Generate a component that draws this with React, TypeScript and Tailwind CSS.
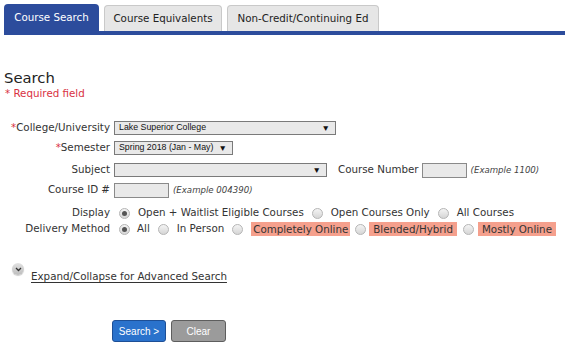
import React from "react";

const Radio = ({ checked, className = "" }: { checked?: boolean; className?: string }) => (
  <span
    className={`inline-flex h-[11px] w-[11px] shrink-0 items-center justify-center rounded-full border border-[#b5b5b5] bg-gradient-to-b from-[#f4f4f4] to-[#d6d6d6] ${className}`}
  >
    {checked && <span className="h-[5px] w-[5px] rounded-full bg-[#555]" />}
  </span>
);

const Select = ({ text, w }: { text: string; w: string }) => (
  <div
    className={`${w} flex h-[14px] items-center justify-between border border-[#7a7a7a] bg-[#e9e9e9] pl-[4px] pr-[5px] text-[8.8px] text-[#111]`}
    style={{ fontFamily: '"Liberation Sans", Arial, sans-serif' }}
  >
    <span>{text}</span>
    <span className="text-[8.5px] leading-none">▼</span>
  </div>
);

const Label = ({ children, req }: { children: React.ReactNode; req?: boolean }) => (
  <div className="w-[110px] shrink-0 text-right">
    {req && <span className="text-[#d9313f]">*</span>}
    {children}
  </div>
);

export default function App() {
  return (
    <div
      className="h-[350px] w-[565px] bg-white text-[10.3px] text-[#333]"
      style={{ fontFamily: '"DejaVu Sans", Verdana, sans-serif' }}
    >
      {/* Tabs */}
      <div className="flex items-end gap-[5px] pl-[4px] pt-[4px]">
        <div className="flex h-[27px] w-[95px] items-center justify-center rounded-t-[4px] bg-[#2c4c9c] text-white">
          Course Search
        </div>
        <div className="flex h-[26px] w-[118px] items-center justify-center rounded-t-[4px] border border-b-0 border-[#c9c9c9] bg-[#e6e6e6] text-[#222]">
          Course Equivalents
        </div>
        <div className="flex h-[26px] w-[152px] items-center justify-center rounded-t-[4px] border border-b-0 border-[#c9c9c9] bg-[#e6e6e6] text-[#222]">
          Non-Credit/Continuing Ed
        </div>
      </div>
      <div className="ml-[4px] h-[4px] bg-[#2c4c9c]" />

      {/* Heading */}
      <div className="mt-[34px] pl-[4px] text-[14.8px] leading-[18px] text-[#222]">Search</div>
      <div className="pl-[5px] leading-[12px] text-[#d9313f]">* Required field</div>

      {/* Form */}
      <div className="mt-[19px] flex flex-col">
        <div className="flex h-[20px] items-center gap-[4px]">
          <Label req>College/University</Label>
          <Select text="Lake Superior College" w="w-[222px]" />
        </div>
        <div className="flex h-[20px] items-center gap-[4px]">
          <Label req>Semester</Label>
          <Select text="Spring 2018 (Jan - May)" w="w-[119px]" />
        </div>
        <div className="mt-[2px] flex h-[20px] items-center gap-[4px]">
          <Label>Subject</Label>
          <Select text="" w="w-[213px]" />
          <span className="ml-[7px]">Course Number</span>
          <span className="-ml-[1px] h-[15px] w-[45px] border border-[#8a8a8a] bg-[#e9e9e9]" />
          <span className="text-[8.6px] italic text-[#444]">(Example 1100)</span>
        </div>
        <div className="flex h-[20px] items-center gap-[4px]">
          <Label>Course ID #</Label>
          <span className="h-[15px] w-[55px] border border-[#8a8a8a] bg-[#e9e9e9]" />
          <span className="text-[8.6px] italic text-[#444]">(Example 004390)</span>
        </div>
        <div className="mt-[5px] flex h-[16px] items-center">
          <Label>Display</Label>
          <div className="ml-[9px] flex items-center gap-[8px]">
            <Radio checked />
            <span>Open + Waitlist Eligible Courses</span>
            <Radio />
            <span>Open Courses Only</span>
            <Radio />
            <span>All Courses</span>
          </div>
        </div>
        <div className="flex h-[16px] items-center">
          <Label>Delivery Method</Label>
          <div className="ml-[9px] flex items-center gap-[8px]">
            <Radio checked />
            <span className="-ml-[1px]">All</span>
            <Radio />
            <span>In Person</span>
            <Radio />
            <span className="bg-[#f5a08d] px-[2px] leading-[14px]">Completely Online</span>
            <Radio className="-ml-[3px]" />
            <span className="-ml-[5px] bg-[#f5a08d] px-[4px] leading-[14px]">Blended/Hybrid</span>
            <Radio className="-ml-[2px]" />
            <span className="-ml-[4px] bg-[#f5a08d] px-[4px] leading-[14px]">Mostly Online</span>
          </div>
        </div>
      </div>

      {/* Expand */}
      <div className="mt-[26px] flex items-start pl-[12px]">
        <span className="flex h-[12px] w-[12px] items-center justify-center rounded-full bg-gradient-to-b from-[#e2e2e2] to-[#bdbdbd] shadow-[0_1px_1px_rgba(0,0,0,0.2)]">
          <svg width="7" height="5" viewBox="0 0 7 5">
            <path d="M1 1 L3.5 3.5 L6 1" stroke="#333" strokeWidth="1.3" fill="none" />
          </svg>
        </span>
        <span className="ml-[7px] mt-[6px] underline underline-offset-[2px] text-[#333]">
          Expand/Collapse for Advanced Search
        </span>
      </div>

      {/* Buttons */}
      <div
        className="mt-[36px] flex gap-[5px] pl-[112px] text-[10px]"
        style={{ fontFamily: '"Liberation Sans", Arial, sans-serif' }}
      >
        <button className="flex h-[22px] w-[54px] items-center justify-center rounded-[3px] border border-[#1d4f96] bg-[#2a72cc] text-white">
          Search &gt;
        </button>
        <button className="flex h-[22px] w-[55px] items-center justify-center rounded-[3px] border border-[#5e5e5e] bg-[#9b9b9b] text-white">
          Clear
        </button>
      </div>
    </div>
  );
}
